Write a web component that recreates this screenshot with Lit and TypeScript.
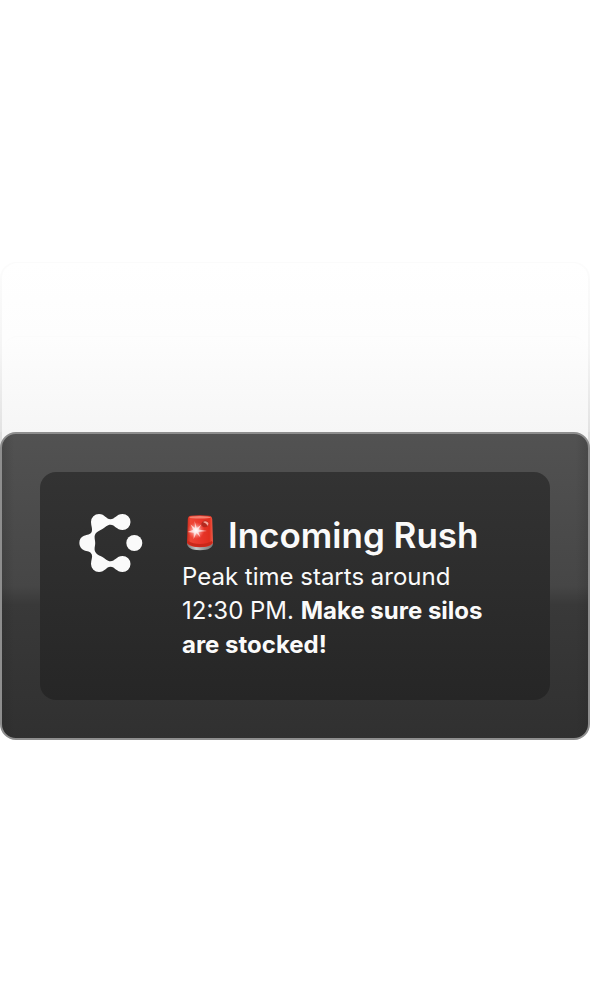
import { LitElement, html, css } from "lit";
import { customElement, property } from "lit/decorators.js";

@customElement("brand-mark")
class BrandMark extends LitElement {
  static styles = css`
    :host { display: block; flex: none; width: 64px; }
    .mark { display: block; width: 100%; }
  `;
  render() {
    return html`<svg class="mark" viewBox="0 0 64 58" fill="#fafafa" aria-hidden="true">
      <path d="M31.5 5.3C36 5.3 37.3 0 43.5 0A8 8 0 0 1 43.5 16C37.5 16 36 10.7 31.5 10.7C28 10.7 26.5 13.3 23 15.2C19 17.2 16 18.5 15.6 22.5C15.5 25 16.2 26.5 16.2 29C16.2 31.5 15.5 33 15.6 35.5C16 39.5 19 40.8 23 42.8C26.5 44.7 28 47.3 31.5 47.3C36 47.3 37.5 42 43.5 42A8 8 0 0 1 43.5 58C37.3 58 36 52.7 31.5 52.7C27 52.7 26 58 20 58A8 8 0 0 1 12 50C12 46 13.8 43 12.8 40.5C11.5 37 8 37.5 5 36.2A7.9 7.9 0 0 1 5 21.8C8 20.5 11.5 21 12.8 17.5C13.8 15 12 12 12 8A8 8 0 0 1 20 0C26 0 27 5.3 31.5 5.3Z"/>
      <circle cx="55.3" cy="29" r="8"/>
    </svg>`;
  }
}

@customElement("siren-icon")
class SirenIcon extends LitElement {
  static styles = css`
    :host { display: block; flex: none; width: 28px; }
    .siren { display: block; width: 100%; }
  `;
  render() {
    return html`<svg class="siren" viewBox="0 0 28 36" role="img" aria-label="Alert">
      <defs>
        <linearGradient id="glass" x1="0" x2="1">
          <stop offset="0" stop-color="#c62a1c"/><stop offset=".14" stop-color="#ee4534"/>
          <stop offset=".55" stop-color="#e8352a"/><stop offset=".86" stop-color="#e02e1e"/>
          <stop offset="1" stop-color="#f0604c"/>
        </linearGradient>
        <linearGradient id="base" x1="0" x2="1">
          <stop offset="0" stop-color="#777"/><stop offset=".35" stop-color="#c4c8c8"/>
          <stop offset=".65" stop-color="#999d9c"/><stop offset="1" stop-color="#777"/>
        </linearGradient>
        <radialGradient id="glow">
          <stop offset="0" stop-color="#fff"/><stop offset=".3" stop-color="#ffc9c5" stop-opacity=".9"/>
          <stop offset="1" stop-color="#ff7066" stop-opacity="0"/>
        </radialGradient>
      </defs>
      <path d="M1 28Q1 35 14 35.3Q27 35 27 28Z" fill="url(#base)"/>
      <path d="M1.8 4Q2 1 5 .8Q14-.2 23 .8Q26 1 26.2 4L27 28Q24 32.3 14 32.3Q4 32.3 1 28Z" fill="url(#glass)"/>
      <path d="M3 2.6Q4 1 14 1T25 2.6Q23 3.6 14 3.6T3 2.6Z" fill="#f2806f"/>
      <path d="M2 26Q7 29 14 29T26 26L26.8 28Q23 32 14 32T1.2 28Z" fill="#c9281a"/>
      <path d="M15 10Q16 5 20 5.5Q24 7 22 11Q18 14 15 10Z" fill="#b5281e"/>
      <path d="M17 7Q20 5 22.5 8L22 11Q20 8 17 7Z" fill="#f4a79b"/>
      <circle cx="10" cy="15.5" r="8.5" fill="url(#glow)"/>
      <path d="M8.6 6L10.8 13L15.5 9.5L12.4 14.5L21 16L12.4 17L14.5 22.5L10.5 18L7.6 24L7.8 17.7L1.5 17L7.3 14.7L4.5 9.5L9 13Z" fill="#fff" fill-opacity=".65"/>
    </svg>`;
  }
}

@customElement("notification-card")
class NotificationCard extends LitElement {
  @property() heading = "";
  @property() detail = "";
  @property() action = "";

  static styles = css`
    :host { display: block; }
    .frame {
      padding: 38px;
      border: 2px solid #8e8e8e;
      border-radius: 16px;
      background:
        linear-gradient(90deg, rgba(30, 30, 30, 0.2), transparent 14px, transparent calc(100% - 14px), rgba(30, 30, 30, 0.2)),
        linear-gradient(180deg, #525252 0%, #464646 50%, #393939 56%, #303030 100%);
      background-origin: border-box;
    }
    .panel {
      display: flex;
      gap: 39px;
      padding: 39px 40px 38px 39px;
      border-radius: 16px;
      background: linear-gradient(180deg, #333333, #262626);
      color: #fafafa;
    }
    .logo { margin-top: 3px; }
    .copy { min-width: 0; }
    .title { display: flex; align-items: center; gap: 14px; padding-left: 4px; }
    .siren { margin-bottom: 6px; }
    .heading { margin: 0; font-size: 35px; line-height: 49px; font-weight: 600; }
    .message { margin: 0; font-size: 24px; line-height: 34px; font-weight: 400; }
    .message strong { font-weight: 700; }
  `;

  render() {
    return html`<article class="frame">
      <div class="panel">
        <brand-mark class="logo"></brand-mark>
        <div class="copy">
          <div class="title">
            <siren-icon class="siren"></siren-icon>
            <h2 class="heading">${this.heading}</h2>
          </div>
          <p class="message">${this.detail} <strong>${this.action}</strong></p>
        </div>
      </div>
    </article>`;
  }
}

@customElement("app-root")
class AppRoot extends LitElement {
  static styles = css`
    :host {
      display: flex;
      flex-direction: column;
      justify-content: center;
      box-sizing: border-box;
      min-height: 100vh;
      padding-top: 2px;
      background: #fff;
      font-family: Inter, "Liberation Sans", sans-serif;
    }
    .stack { border-radius: 16px; background: linear-gradient(180deg, #fcfcfc, #f4f4f4 90px, #dedede 190px); }
    .behind { margin: 0 2px; border-radius: 16px 16px 0 0; background: #fdfdfd; }
    .layer { border-top: 1px solid #fbfbfb; border-radius: 16px 16px 0 0; }
    .far { height: 73px; background: linear-gradient(180deg, #ffffff, #fdfdfd); }
    .near { height: 95px; background: linear-gradient(180deg, #fdfdfd, #f6f6f6); }
    .front { background: linear-gradient(90deg, #dedede 2px, #f6f6f6 2px calc(100% - 2px), #dedede calc(100% - 2px)) top / 100% 50% no-repeat #fff; }
  `;
  render() {
    return html`<main class="stack">
      <div class="behind" aria-hidden="true">
        <div class="layer far"></div>
        <div class="layer near"></div>
      </div>
      <div class="front">
        <notification-card
          heading="Incoming Rush"
          detail="Peak time starts around 12:30 PM."
          action="Make sure silos are stocked!"
        ></notification-card>
      </div>
    </main>`;
  }
}
